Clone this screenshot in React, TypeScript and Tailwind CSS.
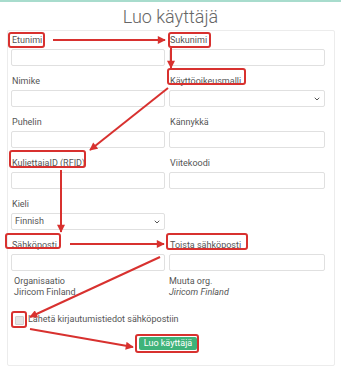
import { ChevronDown } from "lucide-react";

const Label = ({ text }: { text: string }) => (
  <div className="h-[17px] pt-[1px] leading-[14px] pl-[1px] text-[9px] text-[#555]">{text}</div>
);

const Input = () => <div className="h-[17px] border border-[#e0e0e0] rounded-[2px] bg-white" />;

const Select = ({ value }: { value?: string }) => (
  <div className="h-[17px] border border-[#e0e0e0] rounded-[2px] bg-white flex items-center justify-between pl-[3px] pr-[3px]">
    <span className="text-[9px] text-[#555]">{value}</span>
    <ChevronDown size={8} strokeWidth={3} className="text-[#555]" />
  </div>
);

const Field = ({ label, select, value }: { label: string; select?: boolean; value?: string }) => (
  <div className="flex flex-col">
    <Label text={label} />
    {select ? <Select value={value} /> : <Input />}
  </div>
);

// red annotation boxes and arrows laid over the form
const boxes = [
  [8, 32, 37, 16],
  [168, 32, 43, 16],
  [167, 68, 79, 17],
  [9, 150, 77, 18],
  [5, 233, 56, 16],
  [166, 233, 82, 17],
  [11, 311, 16, 17],
  [135, 334, 64, 19],
];

const arrows = [
  [53, 40, 165, 40],
  [171, 48, 171, 68],
  [168, 88, 90, 150],
  [61, 170, 61, 232],
  [70, 244, 164, 244],
  [160, 257, 30, 317],
  [30, 329, 133, 347],
];

const Annotations = () => (
  <svg className="absolute inset-0 pointer-events-none" width={341} height={368}>
    <defs>
      <marker
        id="head"
        viewBox="0 0 10 10"
        refX="9"
        refY="5"
        markerWidth="9"
        markerHeight="8"
        markerUnits="userSpaceOnUse"
        orient="auto"
      >
        <path d="M0,0 L10,5 L0,10 z" fill="#d8312f" />
      </marker>
    </defs>
    {boxes.map(([x, y, w, h], i) => (
      <rect key={i} x={x + 1} y={y + 1} width={w - 2} height={h - 2} rx={2} fill="none" stroke="#d8312f" strokeWidth={2} />
    ))}
    {arrows.map(([x1, y1, x2, y2], i) => (
      <line key={i} x1={x1} y1={y1} x2={x2} y2={y2} stroke="#d8312f" strokeWidth={2} markerEnd="url(#head)" />
    ))}
  </svg>
);

export default function App() {
  return (
    <div className="relative w-[341px] h-[368px] bg-white overflow-hidden font-['Roboto',sans-serif]">
      <div className="h-[2px] bg-[#a8dccd]" />
      <h1 className="h-[28px] flex items-center justify-center text-[18px] font-light text-[#666]">Luo käyttäjä</h1>
      <div className="w-[328px] h-[336px] ml-[7px] border border-[#ececec] rounded-[2px] pl-[3px] pt-[1px]">
        <div className="grid grid-cols-[154px_156px] gap-x-[4px] gap-y-[7px]">
          <Field label="Etunimi" />
          <Field label="Sukunimi" />
          <Field label="Nimike" />
          <Field label="Käyttöoikeusmalli" select />
          <Field label="Puhelin" />
          <Field label="Kännykkä" />
          <Field label="KuljettajaID (RFID)" />
          <Field label="Viitekoodi" />
          <Field label="Kieli" select value="Finnish" />
          <div />
          <Field label="Sähköposti" />
          <Field label="Toista sähköposti" />
        </div>
        <div className="grid grid-cols-[154px_156px] gap-x-[4px] mt-[5px] text-[9px] leading-[11px] text-[#555]">
          <div className="pl-[3px]">
            <div>Organisaatio</div>
            <div>Jiricom Finland</div>
          </div>
          <div>
            <div>Muuta org.</div>
            <div className="italic">Jiricom Finland</div>
          </div>
        </div>
        <div className="flex items-center h-[14px] mt-[15px] pl-[4px] gap-[4px] w-[314px]">
          <div className="w-[9px] h-[9px] bg-[#e4e4e4] border border-[#d0d0d0] rounded-[1px]" />
          <span className="text-[9px] text-[#555]">Lähetä kirjautumistiedot sähköpostiin</span>
        </div>
        <div className="flex justify-center w-[314px] mt-[10px]">
          <div className="w-[58px] h-[13px] bg-[#3fb37a] rounded-[2px] flex items-center justify-center text-[9px] text-white">
            Luo käyttäjä
          </div>
        </div>
      </div>
      <Annotations />
    </div>
  );
}
